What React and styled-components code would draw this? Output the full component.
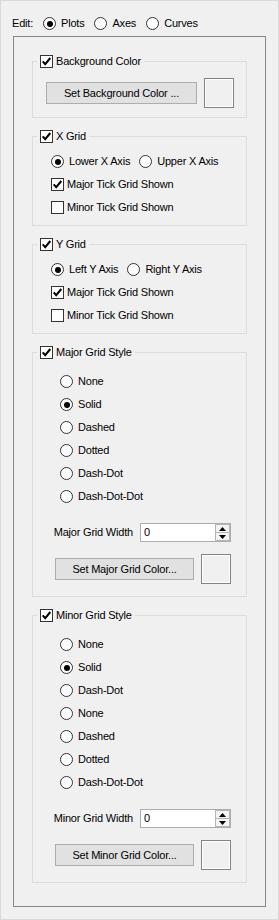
import React from "react";
import styled, { createGlobalStyle } from "styled-components";

const GlobalStyle = createGlobalStyle`
  html, body { margin: 0; padding: 0; background: #f0f0f0; }
  body {
    font-family: "Liberation Sans", Arial, sans-serif;
    font-size: 11px;
    letter-spacing: -0.2px;
    color: #000;
  }
  *, *::before, *::after { box-sizing: border-box; }
`;

const Page = styled.div`
  width: 279px;
  height: 920px;
  border: 1px solid #d9d9d9;
  padding: 16px 12px 12px;
  display: flex;
  flex-direction: column;
`;

const Header = styled.div`
  display: flex;
  align-items: center;
  height: 13px;
  margin: 0 0 6px -1px;
  gap: 10px;
`;

const Frame = styled.div`
  flex: 1;
  border: 1px solid #828790;
  padding: 18px 18px 0;
  display: flex;
  flex-direction: column;
  gap: 12px;
`;

const Group = styled.fieldset`
  margin: 0;
  padding: 0;
  min-width: 0;
  border: 1px solid #dcdcdc;
`;

const Legend = styled.legend`
  margin-left: 4px;
  padding: 0 3px;
  height: 13px;
  display: flex;
  align-items: center;
  gap: 3px;
  line-height: 13px;
  white-space: nowrap;
`;

const Label = styled.span`
  line-height: 13px;
  white-space: nowrap;
`;

const Option = styled.label`
  display: inline-flex;
  align-items: center;
  gap: ${(p) => p.$gap ?? 4}px;
  height: ${(p) => p.$h ?? 17}px;
  white-space: nowrap;
`;

const RadioMark = styled.span`
  flex: none;
  width: 13px;
  height: 13px;
  border: 1px solid #333;
  border-radius: 50%;
  background: #fff;
  display: flex;
  align-items: center;
  justify-content: center;
  &::after {
    content: "";
    display: ${(p) => (p.$checked ? "block" : "none")};
    width: 6px;
    height: 6px;
    border-radius: 50%;
    background: #000;
  }
`;

const CheckMark = styled.span`
  flex: none;
  width: 13px;
  height: 13px;
  border: 1px solid #333;
  background: #fff;
  display: flex;
  align-items: center;
  justify-content: center;
`;

const Radio = ({ checked, children }) => (
  <Option $gap={5}>
    <RadioMark $checked={checked} />
    <Label>{children}</Label>
  </Option>
);

const Check = ({ checked, children, h }) => (
  <Option $gap={3} $h={h}>
    <CheckMark>
      {checked && (
        <svg width="11" height="11" viewBox="0 0 11 11">
          <polyline
            points="1.7,5.3 4.2,8.1 9.3,2"
            fill="none"
            stroke="#000"
            strokeWidth="2"
          />
        </svg>
      )}
    </CheckMark>
    <Label>{children}</Label>
  </Option>
);

const ColorBody = styled.div`
  padding: 10px 12px 9px 13px;
  display: flex;
  align-items: center;
  gap: 7px;
`;

const AxisBody = styled.div`
  padding: 10px 0 9px 18px;
  display: flex;
  flex-direction: column;
  gap: 6px;
`;

const RadioRow = styled.div`
  display: flex;
  align-items: center;
  gap: 9px;
`;

const StyleBody = styled.div`
  padding: 14px 15px 12px 0;
  display: flex;
  flex-direction: column;
`;

const RadioList = styled.div`
  padding-left: 27px;
  display: flex;
  flex-direction: column;
  gap: 6px;
`;

const EndRow = styled.div`
  display: flex;
  align-items: center;
  justify-content: flex-end;
  gap: 7px;
  margin-top: ${(p) => p.$mt}px;
`;

const Button = styled.button`
  width: ${(p) => p.$w}px;
  height: 22px;
  padding: 0;
  margin: 0;
  border: 1px solid #adadad;
  background: #e1e1e1;
  font: inherit;
  letter-spacing: inherit;
  color: #000;
  white-space: nowrap;
`;

const Swatch = styled.div`
  flex: none;
  width: 30px;
  height: 30px;
  border: 1px solid #838383;
  box-shadow: inset 0 0 0 1px #fff;
  background: #f0f0f0;
`;

const SpinBox = styled.div`
  width: 91px;
  height: 19px;
  border: 1px solid #abadb3;
  background: #fff;
  display: flex;
  align-items: stretch;
`;

const SpinValue = styled.span`
  flex: 1;
  padding-left: 3px;
  line-height: 17px;
`;

const SpinArrows = styled.div`
  width: 15px;
  display: flex;
  flex-direction: column;
  border: 1px solid #b5b5b5;
  background: #f4f4f4;
`;

const ArrowBtn = styled.div`
  flex: 1;
  display: flex;
  align-items: center;
  justify-content: center;
  & + & {
    border-top: 1px solid #b5b5b5;
  }
`;

const Up = () => (
  <svg width="7" height="4" viewBox="0 0 7 4">
    <polygon points="3.5,0 7,4 0,4" fill="#000" />
  </svg>
);
const Down = () => (
  <svg width="7" height="4" viewBox="0 0 7 4">
    <polygon points="0,0 7,0 3.5,4" fill="#000" />
  </svg>
);

const Spin = ({ value }) => (
  <SpinBox>
    <SpinValue>{value}</SpinValue>
    <SpinArrows>
      <ArrowBtn>
        <Up />
      </ArrowBtn>
      <ArrowBtn>
        <Down />
      </ArrowBtn>
    </SpinArrows>
  </SpinBox>
);

const AxisGroup = ({ title, a, b }) => (
  <Group>
    <Legend>
      <Check checked h={13}>{title}</Check>
    </Legend>
    <AxisBody>
      <RadioRow>
        <Radio checked>{a}</Radio>
        <Radio>{b}</Radio>
      </RadioRow>
      <Check checked>Major Tick Grid Shown</Check>
      <Check>Minor Tick Grid Shown</Check>
    </AxisBody>
  </Group>
);

const StyleGroup = ({ title, styles, widthLabel, colorLabel }) => (
  <Group>
    <Legend>
      <Check checked h={13}>{title}</Check>
    </Legend>
    <StyleBody>
      <RadioList>
        {styles.map((s, i) => (
          <Radio key={i} checked={i === 1}>
            {s}
          </Radio>
        ))}
      </RadioList>
      <EndRow $mt={18}>
        <Label>{widthLabel}</Label>
        <Spin value="0" />
      </EndRow>
      <EndRow $mt={12}>
        <Button $w={139}>{colorLabel}</Button>
        <Swatch />
      </EndRow>
    </StyleBody>
  </Group>
);

export default function App() {
  return (
    <>
      <GlobalStyle />
      <Page>
        <Header>
          <Label>Edit:</Label>
          <Radio checked>Plots</Radio>
          <Radio>Axes</Radio>
          <Radio>Curves</Radio>
        </Header>
        <Frame>
          <Group>
            <Legend>
              <Check checked h={13}>Background Color</Check>
            </Legend>
            <ColorBody>
              <Button $w={151}>Set Background Color ...</Button>
              <Swatch />
            </ColorBody>
          </Group>
          <AxisGroup title="X Grid" a="Lower X Axis" b="Upper X Axis" />
          <AxisGroup title="Y Grid" a="Left Y Axis" b="Right Y Axis" />
          <StyleGroup
            title="Major Grid Style"
            styles={["None", "Solid", "Dashed", "Dotted", "Dash-Dot", "Dash-Dot-Dot"]}
            widthLabel="Major Grid Width"
            colorLabel="Set Major Grid Color..."
          />
          <StyleGroup
            title="Minor Grid Style"
            styles={["None", "Solid", "Dash-Dot", "None", "Dashed", "Dotted", "Dash-Dot-Dot"]}
            widthLabel="Minor Grid Width"
            colorLabel="Set Minor Grid Color..."
          />
        </Frame>
      </Page>
    </>
  );
}
